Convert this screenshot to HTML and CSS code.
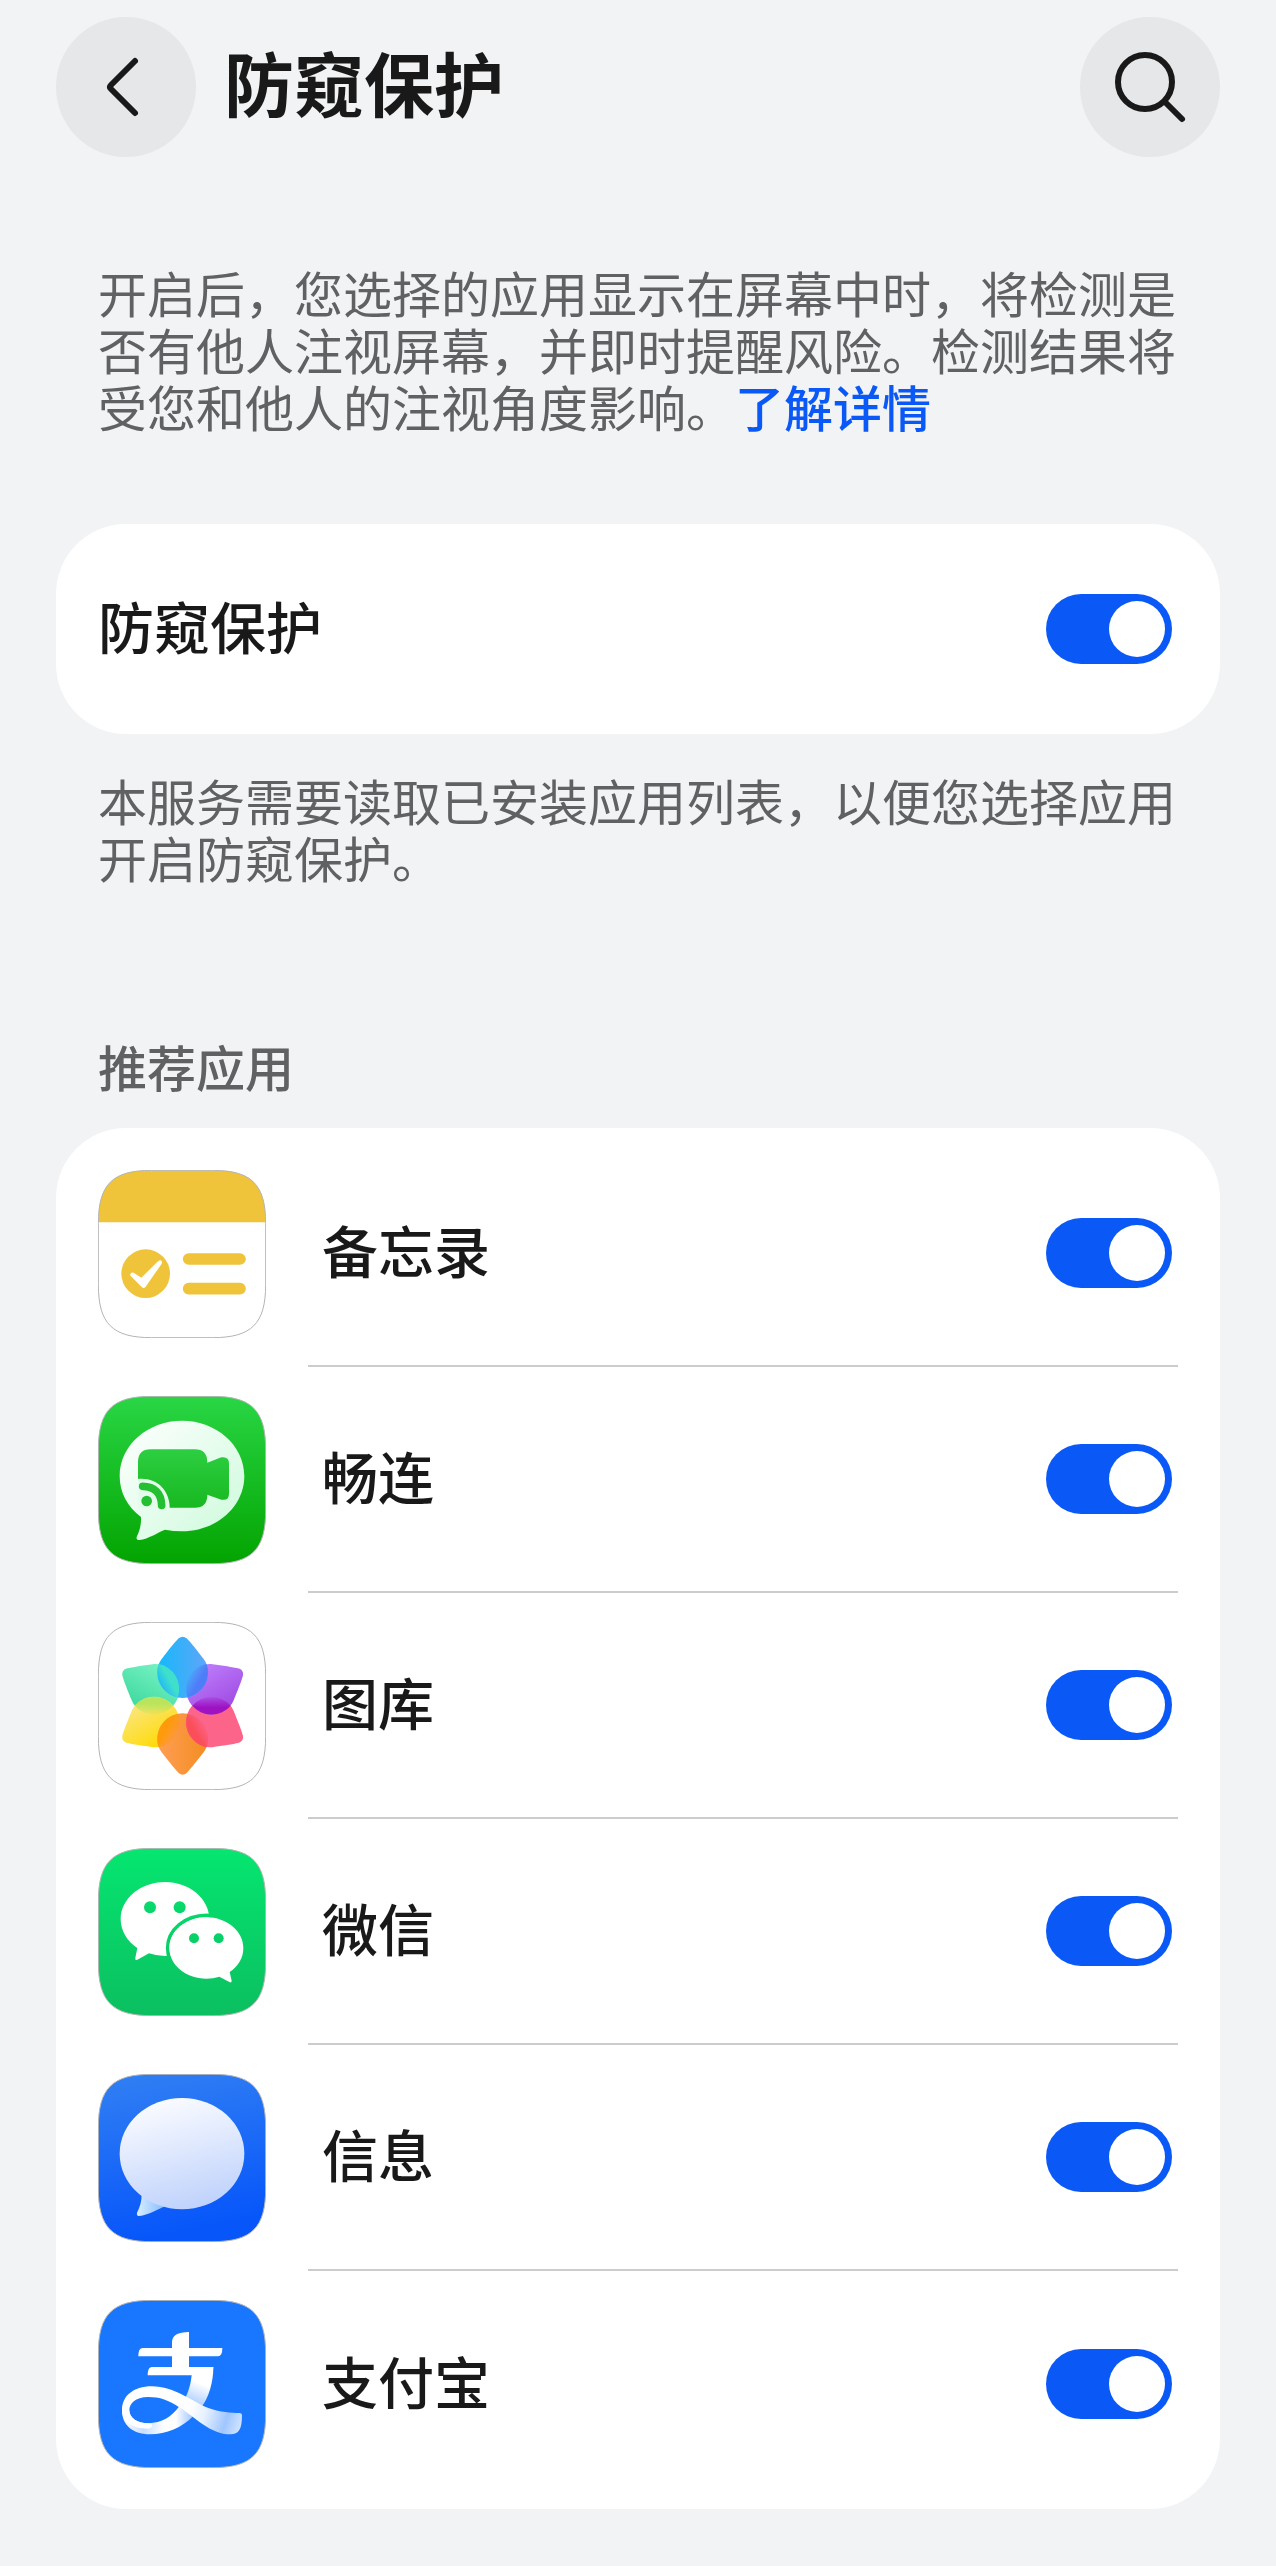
FILE: index.html
```
<!DOCTYPE html>
<html lang="zh-CN">
<head>
    <meta charset="UTF-8">
    <meta name="viewport" content="width=device-width, initial-scale=1.0">
    <title>防窥保护</title>
    <link rel="stylesheet" href="styles.css">
</head>
<body>
    <!-- Shared icon plate -->
    <svg class="defs" aria-hidden="true">
        <defs>
            <path id="plate" d="M0 160C0 42 42 0 160 0H342C460 0 502 42 502 160V342C502 460 460 502 342 502H160C42 502 0 460 0 342Z"/>
            <clipPath id="plate-clip"><use href="#plate"/></clipPath>
        </defs>
    </svg>

    <header class="header">
        <button type="button" class="round-button" aria-label="返回">
            <svg viewBox="0 0 140 140"><path d="M79 44L55 68Q53 70 55 72L79 96"/></svg>
        </button>
        <h1>防窥保护</h1>
        <button type="button" class="round-button" aria-label="搜索">
            <svg viewBox="0 0 140 140"><circle cx="65" cy="65" r="27"/><path d="M85 85L102 102"/></svg>
        </button>
    </header>

    <main>
        <p class="note">开启后，您选择的应用显示在屏幕中时，将检测是否有他人注视屏幕，并即时提醒风险。检测结果将受您和他人的注视角度影响。<a href="#">了解详情</a></p>

        <section class="card main-switch">
            <label for="protect">防窥保护</label>
            <input type="checkbox" class="switch" id="protect" checked>
        </section>

        <p class="note">本服务需要读取已安装应用列表，以便您选择应用开启防窥保护。</p>

        <h2>推荐应用</h2>
        <ul class="card app-list">
            <li>
                <svg class="app-icon" viewBox="-1 -1 504 504" aria-hidden="true">
                    <use href="#plate" fill="#fff"/>
                    <path d="M0 0H502V156H0Z" fill="#efc43b" clip-path="url(#plate-clip)"/>
                    <circle cx="142" cy="310" r="73" fill="#efc43b"/>
                    <path d="M96 311Q100 304 107 308L129 322L179 273Q187 266 191 274Q192 279 186 286L142 349Q135 357 128 348L98 318Q95 315 96 311Z" fill="#fff"/>
                    <path d="M271 266H425M271 355H425" stroke="#efc43b" stroke-width="35" stroke-linecap="round"/>
                    <use href="#plate" class="plate-edge"/>
                </svg>
                <div class="app-row">
                    <label for="memo">备忘录</label>
                    <input type="checkbox" class="switch" id="memo" checked>
                </div>
            </li>
            <li>
                <svg class="app-icon" viewBox="-1 -1 504 504" aria-hidden="true">
                    <defs>
                        <linearGradient id="call-bg" x1="0" y1="0" x2="0" y2="1"><stop stop-color="#29d645"/><stop offset="1" stop-color="#03a400"/></linearGradient>
                        <linearGradient id="call-bubble" x1="0" y1="0" x2="1" y2="1"><stop stop-color="#fff"/><stop offset="1" stop-color="#ccfadb"/></linearGradient>
                        <linearGradient id="call-camera" x1="0" y1="0" x2="0" y2="1"><stop stop-color="#2dcf42"/><stop offset="1" stop-color="#17b820"/></linearGradient>
                    </defs>
                    <use href="#plate" fill="url(#call-bg)"/>
                    <g transform="translate(-55 -49)">
                        <path d="M306 122C409 122 493 196 493 288S409 454 306 454Q280 454 255 449C230 459 207 476 178 480Q168 480 170 471C180 450 184 432 183 411C143 381 119 338 119 288C119 196 203 122 306 122Z" fill="url(#call-bubble)"/>
                        <path d="M212 208H344Q382 208 382 248L424 232Q447 229 447 251V341Q447 363 424 359L382 344Q382 383 344 383H174V246Q174 208 212 208Z" fill="url(#call-camera)"/>
                        <path d="M174 297C228 291 269 329 269 384H174Z" fill="#e5fcec"/>
                        <path d="M188 319C224 319 244 340 245 376" fill="none" stroke="#24c031" stroke-width="23" stroke-linecap="round"/>
                        <circle cx="200" cy="363" r="16" fill="#24c031"/>
                    </g>
                    <use href="#plate" class="plate-edge"/>
                </svg>
                <div class="app-row">
                    <label for="call">畅连</label>
                    <input type="checkbox" class="switch" id="call" checked>
                </div>
            </li>
            <li>
                <svg class="app-icon" viewBox="-1 -1 504 504" aria-hidden="true">
                    <defs>
                        <path id="petal" d="M296 100Q308 90 320 100C334 114 352 138 371 162C380 174 384 187 384 203A76 76 0 0 1 232 203C232 187 236 174 245 162C264 138 282 114 296 100Z"/>
                        <linearGradient id="petal-blue"><stop stop-color="#15b8fb"/><stop offset="1" stop-color="#61a5f8"/></linearGradient>
                        <linearGradient id="petal-purple"><stop stop-color="#bd7dfb"/><stop offset="1" stop-color="#a04be2"/></linearGradient>
                        <linearGradient id="petal-orange"><stop stop-color="#f38d20"/><stop offset="1" stop-color="#ff9e55"/></linearGradient>
                        <linearGradient id="petal-yellow"><stop stop-color="#ffda00"/><stop offset="1" stop-color="#fae680"/></linearGradient>
                        <linearGradient id="petal-green"><stop stop-color="#3fd99e"/><stop offset="1" stop-color="#77f2c4"/></linearGradient>
                        <!-- Overlap of two neighbouring petals, fading towards one side -->
                        <linearGradient id="lens-fade"><stop stop-color="#fff" stop-opacity=".1"/><stop offset=".6" stop-color="#fff"/></linearGradient>
                        <mask id="lens-mask"><path d="M280 150H336V280H280Z" fill="url(#lens-fade)"/></mask>
                        <path id="lens" d="M308 158A76 76 0 0 1 308 273A76 76 0 0 1 308 158Z" mask="url(#lens-mask)"/>
                    </defs>
                    <use href="#plate" fill="#fff"/>
                    <g transform="translate(-55 -52)">
                        <use href="#petal" fill="url(#petal-green)" transform="rotate(300 308 302)"/>
                        <use href="#petal" fill="url(#petal-yellow)" transform="rotate(240 308 302)"/>
                        <use href="#petal" fill="url(#petal-orange)" transform="rotate(180 308 302)"/>
                        <use href="#petal" fill="#fc6489" transform="rotate(120 308 302)"/>
                        <use href="#petal" fill="url(#petal-purple)" transform="rotate(60 308 302)"/>
                        <use href="#petal" fill="url(#petal-blue)"/>
                        <use href="#lens" fill="#4f7df8" transform="rotate(30 308 302)"/>
                        <use href="#lens" fill="#9f12c2" transform="rotate(90 308 302)"/>
                        <use href="#lens" fill="#fa4f5a" transform="rotate(150 308 302)"/>
                        <use href="#lens" fill="#ff9a0d" transform="rotate(210 308 302)"/>
                        <use href="#lens" fill="#b9e45c" transform="rotate(270 308 302)"/>
                        <use href="#lens" fill="#3fe0cb" transform="rotate(330 308 302)"/>
                    </g>
                    <use href="#plate" class="plate-edge"/>
                </svg>
                <div class="app-row">
                    <label for="gallery">图库</label>
                    <input type="checkbox" class="switch" id="gallery" checked>
                </div>
            </li>
            <li>
                <svg class="app-icon" viewBox="-1 -1 504 504" aria-hidden="true">
                    <defs>
                        <linearGradient id="chat-bg" gradientUnits="userSpaceOnUse" x1="0" y1="0" x2="0" y2="502"><stop stop-color="#05e670"/><stop offset="1" stop-color="#0bbf60"/></linearGradient>
                    </defs>
                    <use href="#plate" fill="url(#chat-bg)"/>
                    <path d="M200 101C273 101 333 151 333 212S273 323 200 323Q174 323 152 315L117 334Q109 337 111 328L117 299C86 279 67 246 67 212C67 151 127 101 200 101Z" fill="#fff"/>
                    <ellipse cx="324" cy="299" rx="116" ry="98" fill="none" stroke="url(#chat-bg)" stroke-width="11"/>
                    <path d="M324 207C385 207 435 248 435 299C435 328 421 353 394 371L400 397Q400 405 393 401L363 385Q345 391 324 391C263 391 213 350 213 299S263 207 324 207Z" fill="#fff"/>
                    <g fill="url(#chat-bg)">
                        <circle cx="155" cy="177" r="18"/><circle cx="244" cy="177" r="18"/>
                        <circle cx="287" cy="270" r="15"/><circle cx="361" cy="270" r="15"/>
                    </g>
                    <use href="#plate" class="plate-edge"/>
                </svg>
                <div class="app-row">
                    <label for="wechat">微信</label>
                    <input type="checkbox" class="switch" id="wechat" checked>
                </div>
            </li>
            <li>
                <svg class="app-icon" viewBox="-1 -1 504 504" aria-hidden="true">
                    <defs>
                        <linearGradient id="sms-bg" x1="0" y1="0" x2=".2" y2="1"><stop stop-color="#3280f3"/><stop offset="1" stop-color="#0756fa"/></linearGradient>
                        <linearGradient id="sms-bubble" x1=".3" y1="0" x2=".6" y2="1"><stop stop-color="#fbfcff"/><stop offset="1" stop-color="#bfd2fc"/></linearGradient>
                        <linearGradient id="sms-tail"><stop stop-color="#d8edff"/><stop offset="1" stop-color="#83bbff"/></linearGradient>
                    </defs>
                    <use href="#plate" fill="url(#sms-bg)"/>
                    <path d="M130 360C130 380 126 396 116 415Q114 425 123 425C150 422 173 408 200 396Z" fill="url(#sms-tail)"/>
                    <ellipse cx="251" cy="238" rx="187" ry="167" fill="url(#sms-bubble)"/>
                    <use href="#plate" class="plate-edge"/>
                </svg>
                <div class="app-row">
                    <label for="sms">信息</label>
                    <input type="checkbox" class="switch" id="sms" checked>
                </div>
            </li>
            <li>
                <svg class="app-icon" viewBox="-1 -1 504 504" aria-hidden="true">
                    <defs>
                        <linearGradient id="pay-leg" gradientUnits="userSpaceOnUse" x1="370" y1="310" x2="345" y2="375"><stop stop-color="#fff"/><stop offset="1" stop-color="#a9ccff"/></linearGradient>
                        <linearGradient id="pay-loop" gradientUnits="userSpaceOnUse" x1="126" y1="0" x2="340" y2="0"><stop stop-color="#fff"/><stop offset=".3" stop-color="#c7deff"/><stop offset=".6" stop-color="#fff"/><stop offset=".75" stop-color="#fff"/><stop offset="1" stop-color="#9fc6ff"/></linearGradient>
                        <linearGradient id="pay-wave" gradientUnits="userSpaceOnUse" x1="330" y1="380" x2="486" y2="430"><stop stop-color="#fff"/><stop offset=".3" stop-color="#e6f0ff"/><stop offset=".7" stop-color="#9fc6ff"/><stop offset="1" stop-color="#d3e5ff"/></linearGradient>
                    </defs>
                    <use href="#plate" fill="#1977ff"/>
                    <g transform="translate(-55 -58)">
                        <path d="M335 283C331 320 320 348 306 365L362 382C387 350 400 303 400 258H335Z" fill="url(#pay-leg)"/>
                        <path d="M298 376C275 408 245 426 205 427C170 427 148 410 148 388H126C126 430 155 460 210 460C260 460 305 440 340 405Z" fill="url(#pay-loop)"/>
                        <path d="M126 388C126 345 160 316 215 316C285 316 335 362 385 381C425 395 450 395 480 396Q486 397 486 403C486 445 476 460 452 460C390 460 345 408 300 380C265 357 240 348 205 348C165 348 148 368 148 388C148 410 170 427 205 427C220 427 222 440 205 443C160 443 126 425 126 388Z" fill="url(#pay-wave)"/>
                        <path d="M276 201V184Q276 153 327 153V201H427Q427 226 414 226H327V258H400L396 283H203Q203 258 216 258H276V226H175Q175 201 188 201Z" fill="#fff"/>
                    </g>
                    <use href="#plate" class="plate-edge"/>
                </svg>
                <div class="app-row">
                    <label for="alipay">支付宝</label>
                    <input type="checkbox" class="switch" id="alipay" checked>
                </div>
            </li>
        </ul>
    </main>
</body>
</html>
```
FILE: styles.css
```
* {
    box-sizing: border-box;
}

body {
    font-family: "Noto Sans CJK SC", sans-serif;
    background-color: #f1f3f5;
    margin: 0;
    padding: 17px 56px 58px;
    color: #191919;
}

.defs {
    position: absolute;
    width: 0;
    height: 0;
}

.header {
    display: flex;
    align-items: center;
    gap: 28px;
    margin-bottom: 106px;
}

h1 {
    flex: 1;
    margin: 0;
    padding-bottom: 10px;
    font-size: 70px;
    line-height: 82px;
    font-weight: 700;
}

.round-button {
    width: 140px;
    height: 140px;
    padding: 0;
    border: none;
    border-radius: 50%;
    background-color: #e6e7e9;
    cursor: pointer;
}

.round-button svg {
    display: block;
    fill: none;
    stroke: #191919;
    stroke-width: 6;
    stroke-linecap: round;
}

.note {
    margin: 0 42px;
    font-size: 49px;
    line-height: 57px;
    color: #606163;
}

.note a {
    color: #0a59f7;
    font-weight: 500;
    text-decoration: none;
}

.card {
    background-color: #fff;
    border-radius: 70px;
}

.card label {
    padding-bottom: 8px;
    font-size: 56px;
    line-height: 66px;
    font-weight: 500;
}

.main-switch {
    display: flex;
    align-items: center;
    justify-content: space-between;
    height: 210px;
    margin: 90px 0 37px;
    padding: 0 48px 0 42px;
}

/* Toggle switch */
.switch {
    appearance: none;
    flex: none;
    display: flex;
    width: 126px;
    height: 70px;
    margin: 0;
    padding: 7px;
    border-radius: 35px;
    background-color: #d1d3d6;
    cursor: pointer;
}

.switch::before {
    content: "";
    width: 56px;
    height: 56px;
    border-radius: 50%;
    background-color: #fff;
}

.switch:checked {
    justify-content: flex-end;
    background-color: #0a59f7;
}

h2 {
    margin: 152px 42px 34px;
    font-size: 49px;
    line-height: 57px;
    font-weight: 500;
    color: #606163;
}

/* App list */
.app-list {
    margin: 0;
    padding: 13px 42px 12px;
    list-style: none;
}

.app-list li {
    display: flex;
    align-items: center;
    gap: 42px;
}

.app-icon {
    flex: none;
    width: 168px;
    height: 168px;
}

.plate-edge {
    fill: none;
    stroke: #b4b4b4;
    stroke-width: 3;
}

.app-row {
    flex: 1;
    display: flex;
    align-items: center;
    justify-content: space-between;
    height: 226px;
    padding: 0 6px 0 14px;
    border-bottom: 2px solid #cccccc;
}

.app-list li:last-child .app-row {
    border-bottom: none;
}
```
